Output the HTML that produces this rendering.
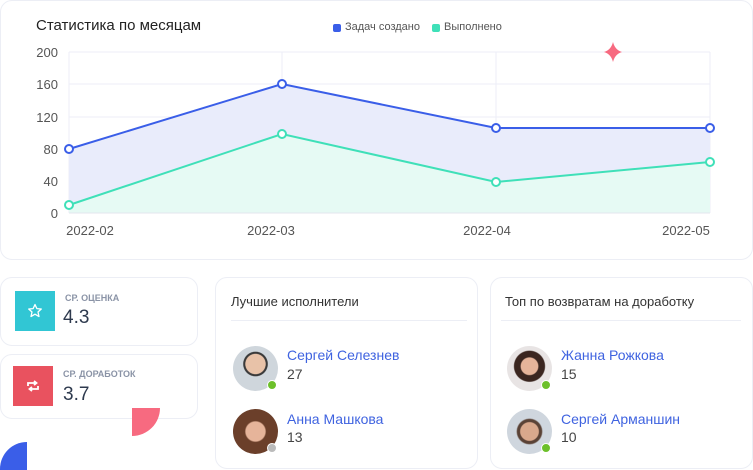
<!DOCTYPE html>
<html><head><meta charset="utf-8"><style>
*{margin:0;padding:0;box-sizing:border-box}
body{width:753px;height:470px;background:#fff;position:relative;overflow:hidden;font-family:"Liberation Sans",sans-serif}
.card{position:absolute;border:1px solid #eceef5;border-radius:12px;background:#fff}
.t{position:absolute;white-space:nowrap}
.av{position:absolute;width:45px;height:45px;border-radius:50%}
.dot{position:absolute;width:10px;height:10px;border-radius:50%;border:1.5px solid #fff}
.name{position:absolute;color:#3f63e0;font-size:14px}
.num{position:absolute;color:#444;font-size:14px}
</style></head><body>
<div class="card" style="left:0;top:0;width:753px;height:260px"></div>
<div class="t" style="left:36px;top:17px;font-size:15px;color:#222">Статистика по месяцам</div>
<div style="position:absolute;left:333px;top:24px;width:8px;height:8px;border-radius:2px;background:#3a5ee8"></div>
<div class="t" style="left:345px;top:21px;font-size:11px;color:#555">Задач создано</div>
<div style="position:absolute;left:432px;top:24px;width:8px;height:8px;border-radius:2px;background:#3fe0b8"></div>
<div class="t" style="left:444px;top:21px;font-size:11px;color:#555">Выполнено</div>
<svg style="position:absolute;left:0;top:0" width="753" height="260">
<g stroke="#eceef7" stroke-width="1">
<line x1="69" y1="52" x2="710" y2="52"/><line x1="69" y1="84" x2="710" y2="84"/><line x1="69" y1="117" x2="710" y2="117"/><line x1="69" y1="149" x2="710" y2="149"/><line x1="69" y1="181" x2="710" y2="181"/>
<line x1="69" y1="52" x2="69" y2="213"/><line x1="282" y1="52" x2="282" y2="213"/><line x1="496" y1="52" x2="496" y2="213"/><line x1="710" y1="52" x2="710" y2="213"/>
</g>
<polygon points="69,149 282,84 496,128 710,128 710,213 69,213" fill="#e9ecfb"/>
<polygon points="69,205 282,134 496,182 710,162 710,213 69,213" fill="#e6faf4"/>
<line x1="69" y1="213" x2="710" y2="213" stroke="#e3e5ee"/>
<polyline points="69,149 282,84 496,128 710,128" fill="none" stroke="#3a5ee8" stroke-width="2"/>
<polyline points="69,205 282,134 496,182 710,162" fill="none" stroke="#3fe0b8" stroke-width="2"/>
<g fill="#fff" stroke="#3a5ee8" stroke-width="2"><circle cx="69" cy="149" r="4"/><circle cx="282" cy="84" r="4"/><circle cx="496" cy="128" r="4"/><circle cx="710" cy="128" r="4"/></g>
<g fill="#fff" stroke="#3fe0b8" stroke-width="2"><circle cx="69" cy="205" r="4"/><circle cx="282" cy="134" r="4"/><circle cx="496" cy="182" r="4"/><circle cx="710" cy="162" r="4"/></g>
<path d="M613,42 Q615,50 622,52 Q615,54 613,62 Q611,54 604,52 Q611,50 613,42Z" fill="#f76a80"/>
<g font-family="Liberation Sans" font-size="13" fill="#555" text-anchor="end">
<text x="58" y="57">200</text><text x="58" y="89">160</text><text x="58" y="122">120</text><text x="58" y="154">80</text><text x="58" y="186">40</text><text x="58" y="218">0</text></g>
<g font-family="Liberation Sans" font-size="13" fill="#555" text-anchor="middle">
<text x="90" y="235">2022-02</text><text x="271" y="235">2022-03</text><text x="487" y="235">2022-04</text><text x="686" y="235">2022-05</text></g>
</svg>

<div class="card" style="left:0;top:277px;width:198px;height:69px"></div>
<div style="position:absolute;left:15px;top:291px;width:40px;height:40px;background:#31c6d4"></div>
<svg style="position:absolute;left:27px;top:303px" width="16" height="16" viewBox="0 0 16 16"><path d="M8,1.5 L9.9,5.6 L14.3,6 L11,9 L12,13.5 L8,11.2 L4,13.5 L5,9 L1.7,6 L6.1,5.6Z" fill="none" stroke="#fff" stroke-width="1.3" stroke-linejoin="round"/></svg>
<div class="t" style="left:65px;top:293px;font-size:9px;color:#8a93a6;font-weight:bold">СР. ОЦЕНКА</div>
<div class="t" style="left:63px;top:307px;font-size:19px;color:#2e3a4e">4.3</div>

<div class="card" style="left:0;top:354px;width:198px;height:65px"></div>
<div style="position:absolute;left:13px;top:366px;width:40px;height:40px;background:#e9525f"></div>
<svg style="position:absolute;left:26px;top:379px" width="14" height="14" viewBox="0 0 14 14"><path d="M2,7 V4 H10 M8,2 L10.5,4 L8,6 M12,7 V10 H4 M6,8 L3.5,10 L6,12" fill="none" stroke="#fff" stroke-width="1.8"/></svg>
<div class="t" style="left:63px;top:369px;font-size:9px;color:#8a93a6;font-weight:bold">СР. ДОРАБОТОК</div>
<div class="t" style="left:63px;top:384px;font-size:19px;color:#2e3a4e">3.7</div>

<div style="position:absolute;left:132px;top:408px;width:28px;height:28px;background:#f76a80;border-bottom-right-radius:28px"></div>
<div style="position:absolute;left:0;top:442px;width:27px;height:28px;background:#3a5ee8;border-top-left-radius:27px"></div>

<div class="card" style="left:215px;top:277px;width:263px;height:192px"></div>
<div class="t" style="left:231px;top:294px;font-size:13px;color:#333">Лучшие исполнители</div>
<div style="position:absolute;left:231px;top:320px;width:236px;height:1px;background:#eceef5"></div>
<div class="av" style="left:233px;top:346px;background:radial-gradient(circle at 50% 40%,#e8c2a8 0 28%,#3a3a3a 30% 34%,#cfd6dc 36%)"></div>
<div class="dot" style="left:267px;top:380px;background:#6cc02a"></div>
<div class="name" style="left:287px;top:347px">Сергей Селезнев</div>
<div class="num" style="left:287px;top:366px">27</div>
<div class="av" style="left:233px;top:409px;background:radial-gradient(circle at 50% 50%,#e6b49a 0 30%,#6b3f2a 34%)"></div>
<div class="dot" style="left:267px;top:443px;background:#bbb"></div>
<div class="name" style="left:287px;top:411px">Анна Машкова</div>
<div class="num" style="left:287px;top:429px">13</div>

<div class="card" style="left:490px;top:277px;width:263px;height:192px"></div>
<div class="t" style="left:505px;top:294px;font-size:13px;color:#333">Топ по возвратам на доработку</div>
<div style="position:absolute;left:501px;top:320px;width:240px;height:1px;background:#eceef5"></div>
<div class="av" style="left:507px;top:346px;background:radial-gradient(circle at 50% 45%,#e6b49a 0 25%,#3b2620 28% 45%,#e8e4e4 48%)"></div>
<div class="dot" style="left:541px;top:380px;background:#6cc02a"></div>
<div class="name" style="left:561px;top:347px">Жанна Рожкова</div>
<div class="num" style="left:561px;top:366px">15</div>
<div class="av" style="left:507px;top:409px;background:radial-gradient(circle at 50% 50%,#d9a88c 0 28%,#5a4236 31% 38%,#cfd6de 42%)"></div>
<div class="dot" style="left:541px;top:443px;background:#6cc02a"></div>
<div class="name" style="left:561px;top:411px">Сергей Арманшин</div>
<div class="num" style="left:561px;top:429px">10</div>
</body></html>
